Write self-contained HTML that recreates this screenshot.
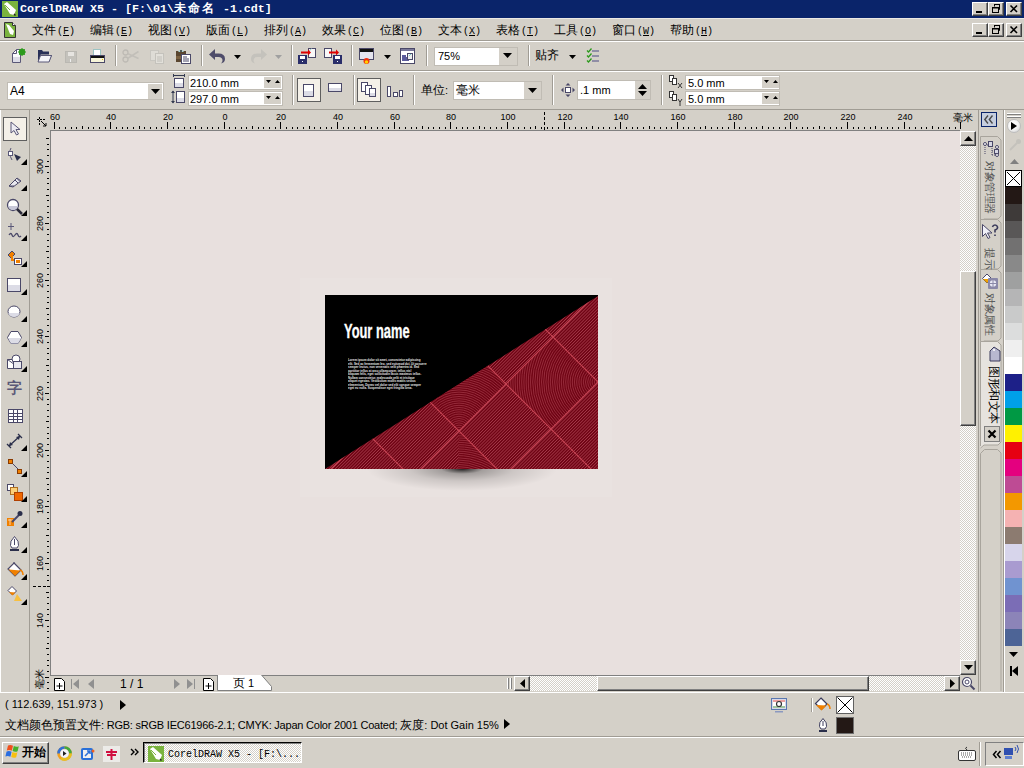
<!DOCTYPE html>
<html><head><meta charset="utf-8">
<style>
*{margin:0;padding:0;box-sizing:border-box}
html,body{width:1024px;height:768px;overflow:hidden}
body{position:relative;background:#d4d0c8;font-family:"Liberation Sans",sans-serif;font-size:11px;color:#000}
.a{position:absolute}
.t{white-space:nowrap;line-height:13px}
.cj{font-size:12px}
.hatch{background-color:#ffffff;background-image:linear-gradient(45deg,#d4d0c8 25%,transparent 25%,transparent 75%,#d4d0c8 75%),linear-gradient(45deg,#d4d0c8 25%,transparent 25%,transparent 75%,#d4d0c8 75%);background-size:2px 2px;background-position:0 0,1px 1px}
.btn{border-top:1px solid #fff;border-left:1px solid #fff;border-right:1px solid #404040;border-bottom:1px solid #404040;background:#d4d0c8;box-shadow:inset -1px -1px 0 #808080}
.inp{background:#fff;border:1px solid #c0bcb4}
.sep{width:2px;border-left:1px solid #a09c94;border-right:1px solid #fff}
.pr{background:#f4f0e8;border:1px solid #5f5f5f}
svg{position:absolute;overflow:visible}
</style></head><body>

<div class="a" style="left:0px;top:0px;width:1024px;height:18px;background:#0a246a"></div>
<div class="a" style="left:0px;top:18px;width:1024px;height:1px;background:#ece9e4"></div>
<div class="a t" style="left:20px;top:3px;color:#fff;font-family:'Liberation Mono',monospace;font-weight:bold;font-size:11.67px;line-height:13px;letter-spacing:0">CorelDRAW X5 - [F:\01\<span class="cj" style="font-weight:bold;letter-spacing:2px">未命名</span> -1.cdt]</div>
<div class="a" style="left:972px;top:2px;width:16px;height:14px;background:#d4d0c8;border-top:1px solid #fff;border-left:1px solid #fff;border-right:1px solid #404040;border-bottom:1px solid #404040;box-shadow:inset -1px -1px 0 #808080"></div>
<div class="a" style="left:988px;top:2px;width:16px;height:14px;background:#d4d0c8;border-top:1px solid #fff;border-left:1px solid #fff;border-right:1px solid #404040;border-bottom:1px solid #404040;box-shadow:inset -1px -1px 0 #808080"></div>
<div class="a" style="left:1006px;top:2px;width:16px;height:14px;background:#d4d0c8;border-top:1px solid #fff;border-left:1px solid #fff;border-right:1px solid #404040;border-bottom:1px solid #404040;box-shadow:inset -1px -1px 0 #808080"></div>
<div class="a" style="left:976px;top:11px;width:6px;height:2px;background:#000"></div>
<svg style="left:988px;top:2px" width="16" height="14"><path d="M6.5 2.5h5v5h-1.5 M6.5 2.5v2" stroke="#000" stroke-width="1" fill="none"/><rect x="6" y="2" width="6" height="1" fill="#000"/><rect x="4" y="5" width="6" height="5" fill="none" stroke="#000" stroke-width="1" transform="translate(.5 .5)"/><rect x="4" y="5" width="6" height="1" fill="#000" transform="translate(.5 .5)"/></svg>
<svg style="left:1006px;top:2px" width="16" height="14"><path d="M4.5 3.5l6.5 6.5M11 3.5L4.5 10" stroke="#000" stroke-width="1.6" fill="none"/></svg>
<svg style="left:2px;top:1px" width="16" height="16" viewBox="0 0 16 16"><rect width="16" height="16" fill="#7ab33e"/><path d="M2 3l3-2 9 8-2 5-4-1z" fill="#fff"/><path d="M12 13l1.5 1.5" stroke="#222" stroke-width="1.5"/><path d="M3 4l5 5" stroke="#7ab33e" stroke-width="1"/></svg>
<svg style="left:4px;top:22px" width="12" height="16" viewBox="0 0 12 16"><path d="M.5 .5h8l3 3v12h-11z" fill="#7ab33e" stroke="#333"/><path d="M2 2l3 1 5 6-1 4-3-1z" fill="#fff"/><path d="M8.5 .5v3h3" fill="#fff" stroke="#333"/></svg>
<div class="a t" style="left:32px;top:23px;line-height:14px"><span class="cj">文件</span><span style="font-family:'Liberation Mono';font-size:10px;margin-left:1px">(<u>F</u>)</span></div>
<div class="a t" style="left:90px;top:23px;line-height:14px"><span class="cj">编辑</span><span style="font-family:'Liberation Mono';font-size:10px;margin-left:1px">(<u>E</u>)</span></div>
<div class="a t" style="left:148px;top:23px;line-height:14px"><span class="cj">视图</span><span style="font-family:'Liberation Mono';font-size:10px;margin-left:1px">(<u>V</u>)</span></div>
<div class="a t" style="left:206px;top:23px;line-height:14px"><span class="cj">版面</span><span style="font-family:'Liberation Mono';font-size:10px;margin-left:1px">(<u>L</u>)</span></div>
<div class="a t" style="left:264px;top:23px;line-height:14px"><span class="cj">排列</span><span style="font-family:'Liberation Mono';font-size:10px;margin-left:1px">(<u>A</u>)</span></div>
<div class="a t" style="left:322px;top:23px;line-height:14px"><span class="cj">效果</span><span style="font-family:'Liberation Mono';font-size:10px;margin-left:1px">(<u>C</u>)</span></div>
<div class="a t" style="left:380px;top:23px;line-height:14px"><span class="cj">位图</span><span style="font-family:'Liberation Mono';font-size:10px;margin-left:1px">(<u>B</u>)</span></div>
<div class="a t" style="left:438px;top:23px;line-height:14px"><span class="cj">文本</span><span style="font-family:'Liberation Mono';font-size:10px;margin-left:1px">(<u>X</u>)</span></div>
<div class="a t" style="left:496px;top:23px;line-height:14px"><span class="cj">表格</span><span style="font-family:'Liberation Mono';font-size:10px;margin-left:1px">(<u>T</u>)</span></div>
<div class="a t" style="left:554px;top:23px;line-height:14px"><span class="cj">工具</span><span style="font-family:'Liberation Mono';font-size:10px;margin-left:1px">(<u>O</u>)</span></div>
<div class="a t" style="left:612px;top:23px;line-height:14px"><span class="cj">窗口</span><span style="font-family:'Liberation Mono';font-size:10px;margin-left:1px">(<u>W</u>)</span></div>
<div class="a t" style="left:670px;top:23px;line-height:14px"><span class="cj">帮助</span><span style="font-family:'Liberation Mono';font-size:10px;margin-left:1px">(<u>H</u>)</span></div>
<div class="a" style="left:972px;top:23px;width:16px;height:14px;background:#d4d0c8;border-top:1px solid #fff;border-left:1px solid #fff;border-right:1px solid #404040;border-bottom:1px solid #404040;box-shadow:inset -1px -1px 0 #808080"></div>
<div class="a" style="left:988px;top:23px;width:16px;height:14px;background:#d4d0c8;border-top:1px solid #fff;border-left:1px solid #fff;border-right:1px solid #404040;border-bottom:1px solid #404040;box-shadow:inset -1px -1px 0 #808080"></div>
<div class="a" style="left:1006px;top:23px;width:16px;height:14px;background:#d4d0c8;border-top:1px solid #fff;border-left:1px solid #fff;border-right:1px solid #404040;border-bottom:1px solid #404040;box-shadow:inset -1px -1px 0 #808080"></div>
<div class="a" style="left:976px;top:32px;width:6px;height:2px;background:#000"></div>
<svg style="left:988px;top:23px" width="16" height="14"><path d="M6.5 2.5h5v5h-1.5 M6.5 2.5v2" stroke="#000" stroke-width="1" fill="none"/><rect x="6" y="2" width="6" height="1" fill="#000"/><rect x="4" y="5" width="6" height="5" fill="none" stroke="#000" stroke-width="1" transform="translate(.5 .5)"/><rect x="4" y="5" width="6" height="1" fill="#000" transform="translate(.5 .5)"/></svg>
<svg style="left:1006px;top:23px" width="16" height="14"><path d="M4.5 3.5l6.5 6.5M11 3.5L4.5 10" stroke="#000" stroke-width="1.6" fill="none"/></svg>
<div class="a" style="left:0px;top:40px;width:1024px;height:1px;background:#a09c94"></div>
<div class="a" style="left:0px;top:41px;width:1024px;height:1px;background:#fff"></div>
<div class="a" style="left:0px;top:70px;width:1024px;height:1px;background:#a09c94"></div>
<div class="a" style="left:0px;top:71px;width:1024px;height:1px;background:#fff"></div>
<div class="a" style="left:115px;top:45px;width:2px;height:21px;border-left:1px solid #a09c94;border-right:1px solid #fff"></div>
<div class="a" style="left:201px;top:45px;width:2px;height:21px;border-left:1px solid #a09c94;border-right:1px solid #fff"></div>
<div class="a" style="left:291px;top:45px;width:2px;height:21px;border-left:1px solid #a09c94;border-right:1px solid #fff"></div>
<div class="a" style="left:351px;top:45px;width:2px;height:21px;border-left:1px solid #a09c94;border-right:1px solid #fff"></div>
<div class="a" style="left:426px;top:45px;width:2px;height:21px;border-left:1px solid #a09c94;border-right:1px solid #fff"></div>
<div class="a" style="left:528px;top:45px;width:2px;height:21px;border-left:1px solid #a09c94;border-right:1px solid #fff"></div>
<div class="a" style="left:434px;top:47px;width:84px;height:19px;background:#fff;border:1px solid #c0bcb4"></div>
<div class="a" style="left:499px;top:48px;width:18px;height:17px;background:#d4d0c8"></div>
<svg style="left:503px;top:53px" width="9" height="5"><path d="M0 0h9L4.5 5z" fill="#000"/></svg>
<div class="a t" style="left:438px;top:50px;font-size:11px">75%</div>
<div class="a t" style="left:535px;top:49px;"><span class="cj">贴齐</span></div>
<svg style="left:234px;top:55px" width="7" height="4"><path d="M0 0h7L3.5 4z" fill="#000"/></svg>
<svg style="left:275px;top:55px" width="7" height="4"><path d="M0 0h7L3.5 4z" fill="#a0a0a0"/></svg>
<svg style="left:384px;top:55px" width="7" height="4"><path d="M0 0h7L3.5 4z" fill="#000"/></svg>
<svg style="left:569px;top:55px" width="7" height="4"><path d="M0 0h7L3.5 4z" fill="#000"/></svg>
<div class="a" style="left:0px;top:109px;width:1024px;height:1px;background:#a09c94"></div>
<div class="a" style="left:7px;top:82px;width:157px;height:18px;background:#fff;border:1px solid #c0bcb4"></div>
<div class="a" style="left:148px;top:84px;width:14px;height:15px;background:#d4d0c8"></div>
<svg style="left:151px;top:89px" width="9" height="5"><path d="M0 0h9L4.5 5z" fill="#000"/></svg>
<div class="a t" style="left:10px;top:85px;font-size:12px">A4</div>
<div class="a" style="left:188px;top:75px;width:95px;height:15px;background:#fff;border:1px solid #c0bcb4"></div>
<div class="a" style="left:264px;top:77px;width:17px;height:11px;background:#d4d0c8"></div>
<svg style="left:266px;top:80px" width="14" height="4"><path d="M0 0h5L2.5 3z M9 3h5L11.5 0z" fill="#000"/></svg>
<div class="a t" style="left:190px;top:77px;">210.0 mm</div>
<div class="a" style="left:188px;top:91px;width:95px;height:15px;background:#fff;border:1px solid #c0bcb4"></div>
<div class="a" style="left:264px;top:93px;width:17px;height:11px;background:#d4d0c8"></div>
<svg style="left:266px;top:96px" width="14" height="4"><path d="M0 0h5L2.5 3z M9 3h5L11.5 0z" fill="#000"/></svg>
<div class="a t" style="left:190px;top:93px;">297.0 mm</div>
<div class="a" style="left:292px;top:75px;width:2px;height:30px;border-left:1px solid #a09c94;border-right:1px solid #fff"></div>
<div class="a" style="left:353px;top:75px;width:2px;height:30px;border-left:1px solid #a09c94;border-right:1px solid #fff"></div>
<div class="a" style="left:413px;top:75px;width:2px;height:30px;border-left:1px solid #a09c94;border-right:1px solid #fff"></div>
<div class="a" style="left:552px;top:75px;width:2px;height:30px;border-left:1px solid #a09c94;border-right:1px solid #fff"></div>
<div class="a" style="left:661px;top:75px;width:2px;height:30px;border-left:1px solid #a09c94;border-right:1px solid #fff"></div>
<div class="a" style="left:297px;top:78px;width:24px;height:24px;background:#f4f0e8;border:1px solid #5f5f5f"></div>
<div class="a" style="left:357px;top:78px;width:24px;height:24px;background:#f4f0e8;border:1px solid #5f5f5f"></div>
<div class="a t" style="left:421px;top:84px;"><span class="cj">单位</span>:</div>
<div class="a" style="left:453px;top:81px;width:89px;height:19px;background:#fff;border:1px solid #c0bcb4"></div>
<div class="a" style="left:524px;top:82px;width:17px;height:17px;background:#d4d0c8"></div>
<svg style="left:528px;top:88px" width="9" height="5"><path d="M0 0h9L4.5 5z" fill="#000"/></svg>
<div class="a t" style="left:456px;top:84px;"><span class="cj">毫米</span></div>
<div class="a" style="left:577px;top:80px;width:74px;height:20px;background:#fff;border:1px solid #c0bcb4"></div>
<div class="a" style="left:635px;top:81px;width:15px;height:18px;background:#d4d0c8"></div>
<svg style="left:638px;top:84px" width="9" height="12"><path d="M0 5h9L4.5 0z M0 7h9L4.5 12z" fill="#000"/></svg>
<div class="a t" style="left:580px;top:84px;">.1 mm</div>
<div class="a" style="left:685px;top:75px;width:95px;height:15px;background:#fff;border:1px solid #c0bcb4"></div>
<div class="a" style="left:762px;top:77px;width:17px;height:11px;background:#d4d0c8"></div>
<svg style="left:764px;top:80px" width="14" height="4"><path d="M0 0h5L2.5 3z M9 3h5L11.5 0z" fill="#000"/></svg>
<div class="a t" style="left:688px;top:77px;">5.0 mm</div>
<div class="a" style="left:685px;top:91px;width:95px;height:15px;background:#fff;border:1px solid #c0bcb4"></div>
<div class="a" style="left:762px;top:93px;width:17px;height:11px;background:#d4d0c8"></div>
<svg style="left:764px;top:96px" width="14" height="4"><path d="M0 0h5L2.5 3z M9 3h5L11.5 0z" fill="#000"/></svg>
<div class="a t" style="left:688px;top:93px;">5.0 mm</div>
<svg style="left:11px;top:48px" width="16" height="16" viewBox="0 0 16 16"><path d="M1.5 5.5l4-4h4v13h-8z" fill="#fbfbfd" stroke="#5a5878"/><rect x="2" y="9" width="7" height="5" fill="#dcdce6"/><path d="M1.5 5.5h4v-4" fill="none" stroke="#5a5878"/><circle cx="11" cy="4" r="3.2" fill="#2c9a1c"/><path d="M11 0v8M7 4h8M8.2 1.2l5.6 5.6M13.8 1.2l-5.6 5.6" stroke="#2c9a1c" stroke-width="1"/></svg>
<svg style="left:37px;top:49px" width="16" height="14" viewBox="0 0 16 14"><path d="M1 1h4l1 1.5h6v3H1z" fill="#283058"/><path d="M1 2v11h11l3-7H4z" fill="#283058"/><path d="M3.5 6.5h11l-2.5 6.5h-11z" fill="#f4f4f8" stroke="#5a5878"/></svg>
<svg style="left:65px;top:51px" width="12" height="12" viewBox="0 0 12 12"><rect x=".5" y=".5" width="11" height="11" fill="#c4c2bc" stroke="#bab8b2"/><rect x="3" y="1" width="6" height="4" fill="#e6e4e0"/><rect x="5" y="8" width="1" height="3" fill="#eee"/></svg>
<svg style="left:90px;top:49px" width="15" height="14" viewBox="0 0 15 14"><rect x="3.5" y=".5" width="7" height="7" fill="#fff" stroke="#9cc4c4"/><rect x=".5" y="6.5" width="14" height="7" fill="#f6f4d8" stroke="#4a4868"/><rect x="1" y="7" width="13" height="2" fill="#111"/><rect x="12" y="10" width="1" height="1" fill="#e8b800"/></svg>
<svg style="left:122px;top:49px" width="17" height="14" viewBox="0 0 17 14"><circle cx="3.5" cy="3.5" r="2.5" fill="none" stroke="#bdbab4" stroke-width="1.3"/><circle cx="3.5" cy="10.5" r="2.5" fill="none" stroke="#bdbab4" stroke-width="1.3"/><path d="M5.5 4.5l11 5M5.5 9.5l11-7" stroke="#c2bfb9" stroke-width="1.5"/></svg>
<svg style="left:150px;top:50px" width="14" height="14" viewBox="0 0 14 14"><rect x=".5" y=".5" width="8" height="10" fill="#dedcd6" stroke="#c8c6c0"/><rect x="5.5" y="3.5" width="8" height="10" fill="#e2e0da" stroke="#c4c2bc"/><path d="M7 7h5M7 9h5M7 11h5" stroke="#c0beb8"/></svg>
<svg style="left:175px;top:48px" width="16" height="16" viewBox="0 0 16 16"><rect x="1" y="3" width="10" height="11" fill="#5a4630"/><rect x="1" y="8" width="10" height="3" fill="#7a6040"/><path d="M3 4q3-5 6 0z" fill="#a8d4d4"/><circle cx="6" cy="3" r="1" fill="#333"/><rect x="6.5" y="6.5" width="9" height="9" fill="#fff" stroke="#4a4868"/><path d="M8 9h4M8 11h6M8 13h6" stroke="#4a4868"/></svg>
<svg style="left:209px;top:48px" width="17" height="16" viewBox="0 0 17 16"><path d="M6 1L0 6.5 6 12V9h3.5q4 0 4 3.5 0 1.5-1.5 3 4-1 4-4.5 0-5.5-6.5-5.5H6z" fill="#4e4c6a"/></svg>
<svg style="left:250px;top:48px" width="17" height="16" viewBox="0 0 17 16"><path d="M11 1l6 5.5-6 5.5V9H7.5q-4 0-4 3.5 0 1.5 1.5 3-4-1-4-4.5 0-5.5 6.5-5.5H11z" fill="#c4c2bc"/></svg>
<svg style="left:298px;top:48px" width="18" height="16" viewBox="0 0 18 16"><rect x="10.5" y=".5" width="7" height="9" fill="#f8f8f8" stroke="#4a4868"/><path d="M10.5 4l3-3.5" stroke="#9cc"/><path d="M3 4.5h8" stroke="#d00" stroke-width="2"/><path d="M10 1.5l3 3-3 3z" fill="#d00"/><rect x=".5" y="7.5" width="8" height="8" fill="#2a2e6a" stroke="#2a2e6a"/><rect x="2" y="8" width="5" height="3" fill="#fff"/><rect x="4" y="13" width="1" height="1" fill="#fff"/></svg>
<svg style="left:324px;top:48px" width="18" height="16" viewBox="0 0 18 16"><rect x=".5" y=".5" width="7" height="9" fill="#f8f8f8" stroke="#4a4868"/><path d="M5 4.5h8" stroke="#d00" stroke-width="2"/><path d="M12 1.5l3 3-3 3z" fill="#d00"/><rect x="9.5" y="7.5" width="8" height="8" fill="#2a2e6a" stroke="#2a2e6a"/><rect x="11" y="8" width="5" height="3" fill="#fff"/><rect x="13" y="13" width="1" height="1" fill="#fff"/></svg>
<svg style="left:359px;top:48px" width="15" height="17" viewBox="0 0 15 17"><rect x=".5" y=".5" width="14" height="11" fill="#e4e4ee" stroke="#4a4868"/><rect x="1" y="1" width="13" height="3" fill="#111"/><circle cx="7.5" cy="13" r="3" fill="#f03010"/><circle cx="7.5" cy="14" r="1.8" fill="#ffd000"/></svg>
<svg style="left:400px;top:48px" width="15" height="16" viewBox="0 0 15 16"><rect x=".5" y=".5" width="14" height="15" fill="#fff" stroke="#4a4868"/><rect x="1" y="1" width="13" height="2" fill="#7a789a"/><path d="M2 7h4v2h3v4H2z" fill="#5c5c9c"/><rect x="7.5" y="5.5" width="5" height="6" fill="#eee" stroke="#4a4868"/><path d="M9 8l2-2" stroke="#7cc"/></svg>
<svg style="left:586px;top:48px" width="14" height="16" viewBox="0 0 14 16"><path d="M6 3h7M6 8h7M6 13h7" stroke="#7a789a" stroke-width="1.5"/><path d="M1 2.5l1.5 1.5 3-3.5M1 7.5l1.5 1.5 3-3.5M1 12.5l1.5 1.5 3-3.5" stroke="#2c9a1c" stroke-width="1.3" fill="none"/></svg>
<svg style="left:173px;top:74px" width="12" height="14" viewBox="0 0 12 14"><path d="M.5 1.5h11M.5 0v3M11.5 0v3" stroke="#333a50"/><rect x="1.5" y="4.5" width="9" height="9" fill="#fff" stroke="#4a4868"/><rect x="2" y="9" width="8" height="4" fill="#dcdce6"/></svg>
<svg style="left:171px;top:90px" width="14" height="14" viewBox="0 0 14 14"><path d="M2 1v12" stroke="#333a50"/><path d="M0 3l2-2.5L4 3zM0 11l2 2.5L4 11z" fill="#333a50"/><rect x="5.5" y="1.5" width="8" height="11" fill="#fff" stroke="#4a4868"/><rect x="6" y="8" width="7" height="4" fill="#dcdce6"/></svg>
<svg style="left:303px;top:84px" width="11" height="13" viewBox="0 0 11 13"><rect x=".5" y=".5" width="10" height="12" fill="#fff" stroke="#4a4868"/><rect x="1" y="7" width="9" height="5" fill="#dcdce6"/></svg>
<svg style="left:328px;top:83px" width="14" height="9" viewBox="0 0 14 9"><rect x=".5" y=".5" width="13" height="8" fill="#fff" stroke="#4a4868"/><rect x="1" y="5" width="12" height="3" fill="#dcdce6"/></svg>
<svg style="left:361px;top:82px" width="16" height="15" viewBox="0 0 16 15"><rect x=".5" y=".5" width="6" height="9" fill="#fff" stroke="#4a4868"/><rect x="4.5" y="3.5" width="6" height="9" fill="#fff" stroke="#4a4868"/><rect x="8.5" y="6.5" width="6" height="8" fill="#fff" stroke="#4a4868"/><rect x="9" y="11" width="5" height="3" fill="#dcdce6"/></svg>
<svg style="left:387px;top:86px" width="16" height="11" viewBox="0 0 16 11"><rect x=".5" y=".5" width="3" height="10" fill="#fff" stroke="#4a4868"/><rect x="6.5" y="6.5" width="4" height="4" fill="#fff" stroke="#4a4868"/><rect x="12.5" y="4.5" width="3" height="6" fill="#fff" stroke="#4a4868"/></svg>
<svg style="left:561px;top:83px" width="14" height="14" viewBox="0 0 14 14"><path d="M7 0l2.5 2.5h-5zM7 14l2.5-2.5h-5zM0 7l2.5-2.5v5zM14 7l-2.5-2.5v5z" fill="#4a4868"/><rect x="4.5" y="4.5" width="5" height="5" fill="#fff" stroke="#4a4868"/></svg>
<svg style="left:669px;top:75px" width="14" height="14" viewBox="0 0 14 14"><rect x=".5" y=".5" width="4" height="6" fill="#fff" stroke="#333"/><rect x="3.5" y="3.5" width="4" height="6" fill="#fff" stroke="#333"/><path d="M9 8l4 5M13 8l-4 5" stroke="#333"/></svg>
<svg style="left:669px;top:91px" width="14" height="15" viewBox="0 0 14 15"><rect x=".5" y=".5" width="4" height="6" fill="#fff" stroke="#333"/><rect x="3.5" y="3.5" width="4" height="6" fill="#fff" stroke="#333"/><path d="M9 8l2 3 2-3M11 11v4" stroke="#333" fill="none"/></svg>
<div class="a" style="left:0px;top:110px;width:1px;height:583px;background:#fff"></div>
<div class="a" style="left:29px;top:110px;width:1px;height:583px;background:#a09c94"></div>
<div class="a" style="left:3px;top:117px;width:24px;height:24px;background:#f4f0e8;border:1px solid #5f5f5f"></div>
<svg style="left:10px;top:121px" width="10" height="15" viewBox="0 0 10 15"><path d="M1 1v11l3-2.5 2.5 4.5 2-1-2.5-4.5h4z" fill="#ecebf2" stroke="#5a5878" stroke-linejoin="round"/></svg>
<svg style="left:7px;top:147px" width="15" height="16" viewBox="0 0 15 16"><path d="M4 1q-3 5 1 12" fill="none" stroke="#5a5878"/><rect x="1.5" y="4.5" width="4" height="4" fill="#fff" stroke="#5a5878"/><path d="M7 7l7 3-4 4z" fill="#2a2e4a"/></svg>
<svg style="left:21px;top:159px" width="6" height="6"><path d="M6 0v6H0z" fill="#000"/></svg>
<svg style="left:8px;top:176px" width="14" height="12" viewBox="0 0 14 12"><path d="M1 10l8-8 4 3-8 6z" fill="#e8e8ee" stroke="#4a4868"/><path d="M1 10h5" stroke="#4a4868"/><path d="M7 4l3 3M9 2.5l3 3" stroke="#4a4868"/></svg>
<svg style="left:21px;top:185px" width="6" height="6"><path d="M6 0v6H0z" fill="#000"/></svg>
<svg style="left:6px;top:198px" width="17" height="18" viewBox="0 0 17 18"><circle cx="7" cy="7" r="5.5" fill="#fff" stroke="#4a4868" stroke-width="1.3"/><path d="M2 8h10q-1 4-5 4-4 0-5-4z" fill="#c8c8d8"/><path d="M11 11l5 5" stroke="#2a2a3a" stroke-width="2.5"/></svg>
<svg style="left:21px;top:210px" width="6" height="6"><path d="M6 0v6H0z" fill="#000"/></svg>
<svg style="left:7px;top:222px" width="16" height="18" viewBox="0 0 16 18"><path d="M4 1v7M1 4.5h6" stroke="#5a5878"/><path d="M2 13q2-3 3 0t3 0 3 0 3 1" fill="none" stroke="#4a4868" stroke-width="1.3"/></svg>
<svg style="left:21px;top:235px" width="6" height="6"><path d="M6 0v6H0z" fill="#000"/></svg>
<svg style="left:7px;top:250px" width="16" height="17" viewBox="0 0 16 17"><path d="M1 5l4-4 3 3-4 4z" fill="#f08000" stroke="#4a4868"/><path d="M5 6v4h4" stroke="#f08000" stroke-width="2" fill="none"/><rect x="7.5" y="8.5" width="7" height="6" fill="#fff" stroke="#4a4868"/><rect x="9" y="10" width="4" height="3" fill="#f08000"/></svg>
<svg style="left:21px;top:261px" width="6" height="6"><path d="M6 0v6H0z" fill="#000"/></svg>
<svg style="left:7px;top:278px" width="15" height="15" viewBox="0 0 15 15"><rect x=".5" y=".5" width="13" height="13" fill="#fff" stroke="#4a4868"/><rect x="1" y="7" width="12" height="6" fill="#dcdce6"/></svg>
<svg style="left:21px;top:289px" width="6" height="6"><path d="M6 0v6H0z" fill="#000"/></svg>
<svg style="left:7px;top:305px" width="14" height="13" viewBox="0 0 14 13"><ellipse cx="7" cy="6.5" rx="6" ry="5.5" fill="#fff" stroke="#4a4868"/><path d="M1.3 8h11.4q-1.5 4-5.7 4-4.2 0-5.7-4z" fill="#dcdce6"/></svg>
<svg style="left:21px;top:316px" width="6" height="6"><path d="M6 0v6H0z" fill="#000"/></svg>
<svg style="left:7px;top:331px" width="15" height="13" viewBox="0 0 15 13"><path d="M4 .5h7l3.5 6-3.5 6H4L.5 6.5z" fill="#fff" stroke="#4a4868"/><path d="M1 7h13.3l-3.3 5.5H4z" fill="#dcdce6"/></svg>
<svg style="left:21px;top:341px" width="6" height="6"><path d="M6 0v6H0z" fill="#000"/></svg>
<svg style="left:7px;top:354px" width="16" height="15" viewBox="0 0 16 15"><path d="M.5 5.5h7v9h-7z" fill="#fff" stroke="#4a4868"/><path d="M.5 5.5l7 5" stroke="#4a4868"/><circle cx="9" cy="5" r="4" fill="#fff" stroke="#4a4868"/><rect x="6.5" y="7.5" width="8" height="7" fill="#e8e8ee" stroke="#4a4868"/></svg>
<svg style="left:21px;top:366px" width="6" height="6"><path d="M6 0v6H0z" fill="#000"/></svg>
<div class="a t" style="left:7px;top:380px;color:#5a5878;font-size:15px;line-height:16px;font-weight:bold">字</div>
<svg style="left:8px;top:409px" width="15" height="14" viewBox="0 0 15 14"><rect x=".5" y=".5" width="14" height="13" fill="#fff" stroke="#4a4868"/><path d="M.5 4.5h14M.5 7.5h14M.5 10.5h14M5.5 .5v13M9.5 .5v13" stroke="#4a4868" fill="none"/></svg>
<svg style="left:7px;top:434px" width="15" height="14" viewBox="0 0 15 14"><path d="M2 12l11-10" stroke="#2a2e4a" stroke-width="1.3"/><path d="M0 10l4 4M11 0l4 4" stroke="#2a2e4a" stroke-width="1.3"/><path d="M2 12l1-4 3 3zM13 2l-1 4-3-3z" fill="#2a2e4a"/></svg>
<svg style="left:21px;top:445px" width="6" height="6"><path d="M6 0v6H0z" fill="#000"/></svg>
<svg style="left:8px;top:459px" width="15" height="16" viewBox="0 0 15 16"><path d="M3 3l9 9" stroke="#4a4868"/><rect x=".5" y=".5" width="4" height="4" fill="#f08000" stroke="#8a3a00"/><rect x="9.5" y="10.5" width="4" height="4" fill="#f08000" stroke="#8a3a00"/></svg>
<svg style="left:21px;top:471px" width="6" height="6"><path d="M6 0v6H0z" fill="#000"/></svg>
<svg style="left:7px;top:484px" width="16" height="17" viewBox="0 0 16 17"><rect x=".5" y=".5" width="6" height="6" fill="#fff" stroke="#4a4868"/><rect x="3.5" y="3.5" width="7" height="7" fill="#fcd078" stroke="#b07020"/><rect x="7.5" y="8.5" width="8" height="8" fill="#f06800" stroke="#b04000"/></svg>
<svg style="left:21px;top:496px" width="6" height="6"><path d="M6 0v6H0z" fill="#000"/></svg>
<svg style="left:6px;top:510px" width="17" height="17" viewBox="0 0 17 17"><rect x="1" y="8" width="7" height="8" fill="#f08000"/><path d="M2 10h5M4 9v6" stroke="#fcd0a0"/><path d="M6 12l7-7" stroke="#4a4868" stroke-width="2"/><circle cx="14" cy="3.5" r="2.5" fill="#2a2e4a"/></svg>
<svg style="left:21px;top:522px" width="6" height="6"><path d="M6 0v6H0z" fill="#000"/></svg>
<svg style="left:9px;top:536px" width="11" height="16" viewBox="0 0 11 16"><path d="M5.5 .5q5 5 4 9l-1.5 2.5h-5L1.5 9.5q-1-4 4-9z" fill="#fff" stroke="#4a4868"/><path d="M5.5 3v6" stroke="#4a4868"/><rect x="1" y="13" width="9" height="2" fill="#2a2e4a"/></svg>
<svg style="left:21px;top:547px" width="6" height="6"><path d="M6 0v6H0z" fill="#000"/></svg>
<svg style="left:6px;top:562px" width="18" height="17" viewBox="0 0 18 17"><path d="M8 1l7 7-6 6-7-7z" fill="#fff" stroke="#4a4868" stroke-width="1.2"/><path d="M2.5 7.5l6.5 6.5 5.5-5.5z" fill="#f08000"/><path d="M14 8q3 1 3 5" stroke="#f08000" stroke-width="1.5" fill="none"/><path d="M8 1V0" stroke="#4a4868"/></svg>
<svg style="left:21px;top:574px" width="6" height="6"><path d="M6 0v6H0z" fill="#000"/></svg>
<svg style="left:7px;top:586px" width="17" height="16" viewBox="0 0 17 16"><path d="M5 .5l4.5 4.5-4 4-4.5-4.5z" fill="#fff" stroke="#4a4868"/><path d="M2 6l3.5 3.5 3-3z" fill="#f08000"/><path d="M10 8l5 7H7z" fill="#f8c040"/></svg>
<svg style="left:21px;top:599px" width="6" height="6"><path d="M6 0v6H0z" fill="#000"/></svg>
<div class="a" style="left:30px;top:110px;width:948px;height:20px;background:#d4d0c8"></div>
<svg style="left:0;top:0" width="1024" height="768"><rect x="54" y="122" width="1" height="7"/><rect x="59" y="127" width="1" height="2"/><rect x="65" y="127" width="1" height="2"/><rect x="71" y="127" width="1" height="2"/><rect x="76" y="127" width="1" height="2"/><rect x="82" y="126" width="1" height="3"/><rect x="88" y="127" width="1" height="2"/><rect x="93" y="127" width="1" height="2"/><rect x="99" y="127" width="1" height="2"/><rect x="105" y="127" width="1" height="2"/><rect x="110" y="122" width="1" height="7"/><rect x="116" y="127" width="1" height="2"/><rect x="122" y="127" width="1" height="2"/><rect x="127" y="127" width="1" height="2"/><rect x="133" y="127" width="1" height="2"/><rect x="139" y="126" width="1" height="3"/><rect x="144" y="127" width="1" height="2"/><rect x="150" y="127" width="1" height="2"/><rect x="156" y="127" width="1" height="2"/><rect x="161" y="127" width="1" height="2"/><rect x="167" y="122" width="1" height="7"/><rect x="173" y="127" width="1" height="2"/><rect x="178" y="127" width="1" height="2"/><rect x="184" y="127" width="1" height="2"/><rect x="190" y="127" width="1" height="2"/><rect x="195" y="126" width="1" height="3"/><rect x="201" y="127" width="1" height="2"/><rect x="207" y="127" width="1" height="2"/><rect x="212" y="127" width="1" height="2"/><rect x="218" y="127" width="1" height="2"/><rect x="224" y="122" width="1" height="7"/><rect x="229" y="127" width="1" height="2"/><rect x="235" y="127" width="1" height="2"/><rect x="241" y="127" width="1" height="2"/><rect x="246" y="127" width="1" height="2"/><rect x="252" y="126" width="1" height="3"/><rect x="258" y="127" width="1" height="2"/><rect x="263" y="127" width="1" height="2"/><rect x="269" y="127" width="1" height="2"/><rect x="275" y="127" width="1" height="2"/><rect x="280" y="122" width="1" height="7"/><rect x="286" y="127" width="1" height="2"/><rect x="292" y="127" width="1" height="2"/><rect x="297" y="127" width="1" height="2"/><rect x="303" y="127" width="1" height="2"/><rect x="309" y="126" width="1" height="3"/><rect x="314" y="127" width="1" height="2"/><rect x="320" y="127" width="1" height="2"/><rect x="326" y="127" width="1" height="2"/><rect x="331" y="127" width="1" height="2"/><rect x="337" y="122" width="1" height="7"/><rect x="343" y="127" width="1" height="2"/><rect x="348" y="127" width="1" height="2"/><rect x="354" y="127" width="1" height="2"/><rect x="360" y="127" width="1" height="2"/><rect x="365" y="126" width="1" height="3"/><rect x="371" y="127" width="1" height="2"/><rect x="377" y="127" width="1" height="2"/><rect x="382" y="127" width="1" height="2"/><rect x="388" y="127" width="1" height="2"/><rect x="394" y="122" width="1" height="7"/><rect x="399" y="127" width="1" height="2"/><rect x="405" y="127" width="1" height="2"/><rect x="411" y="127" width="1" height="2"/><rect x="416" y="127" width="1" height="2"/><rect x="422" y="126" width="1" height="3"/><rect x="428" y="127" width="1" height="2"/><rect x="433" y="127" width="1" height="2"/><rect x="439" y="127" width="1" height="2"/><rect x="445" y="127" width="1" height="2"/><rect x="450" y="122" width="1" height="7"/><rect x="456" y="127" width="1" height="2"/><rect x="462" y="127" width="1" height="2"/><rect x="467" y="127" width="1" height="2"/><rect x="473" y="127" width="1" height="2"/><rect x="479" y="126" width="1" height="3"/><rect x="484" y="127" width="1" height="2"/><rect x="490" y="127" width="1" height="2"/><rect x="496" y="127" width="1" height="2"/><rect x="501" y="127" width="1" height="2"/><rect x="507" y="122" width="1" height="7"/><rect x="513" y="127" width="1" height="2"/><rect x="518" y="127" width="1" height="2"/><rect x="524" y="127" width="1" height="2"/><rect x="530" y="127" width="1" height="2"/><rect x="535" y="126" width="1" height="3"/><rect x="541" y="127" width="1" height="2"/><rect x="547" y="127" width="1" height="2"/><rect x="552" y="127" width="1" height="2"/><rect x="558" y="127" width="1" height="2"/><rect x="564" y="122" width="1" height="7"/><rect x="569" y="127" width="1" height="2"/><rect x="575" y="127" width="1" height="2"/><rect x="581" y="127" width="1" height="2"/><rect x="586" y="127" width="1" height="2"/><rect x="592" y="126" width="1" height="3"/><rect x="598" y="127" width="1" height="2"/><rect x="603" y="127" width="1" height="2"/><rect x="609" y="127" width="1" height="2"/><rect x="615" y="127" width="1" height="2"/><rect x="620" y="122" width="1" height="7"/><rect x="626" y="127" width="1" height="2"/><rect x="632" y="127" width="1" height="2"/><rect x="637" y="127" width="1" height="2"/><rect x="643" y="127" width="1" height="2"/><rect x="649" y="126" width="1" height="3"/><rect x="654" y="127" width="1" height="2"/><rect x="660" y="127" width="1" height="2"/><rect x="666" y="127" width="1" height="2"/><rect x="671" y="127" width="1" height="2"/><rect x="677" y="122" width="1" height="7"/><rect x="683" y="127" width="1" height="2"/><rect x="688" y="127" width="1" height="2"/><rect x="694" y="127" width="1" height="2"/><rect x="700" y="127" width="1" height="2"/><rect x="705" y="126" width="1" height="3"/><rect x="711" y="127" width="1" height="2"/><rect x="717" y="127" width="1" height="2"/><rect x="722" y="127" width="1" height="2"/><rect x="728" y="127" width="1" height="2"/><rect x="734" y="122" width="1" height="7"/><rect x="739" y="127" width="1" height="2"/><rect x="745" y="127" width="1" height="2"/><rect x="751" y="127" width="1" height="2"/><rect x="756" y="127" width="1" height="2"/><rect x="762" y="126" width="1" height="3"/><rect x="768" y="127" width="1" height="2"/><rect x="773" y="127" width="1" height="2"/><rect x="779" y="127" width="1" height="2"/><rect x="785" y="127" width="1" height="2"/><rect x="790" y="122" width="1" height="7"/><rect x="796" y="127" width="1" height="2"/><rect x="802" y="127" width="1" height="2"/><rect x="807" y="127" width="1" height="2"/><rect x="813" y="127" width="1" height="2"/><rect x="819" y="126" width="1" height="3"/><rect x="824" y="127" width="1" height="2"/><rect x="830" y="127" width="1" height="2"/><rect x="836" y="127" width="1" height="2"/><rect x="841" y="127" width="1" height="2"/><rect x="847" y="122" width="1" height="7"/><rect x="853" y="127" width="1" height="2"/><rect x="858" y="127" width="1" height="2"/><rect x="864" y="127" width="1" height="2"/><rect x="870" y="127" width="1" height="2"/><rect x="875" y="126" width="1" height="3"/><rect x="881" y="127" width="1" height="2"/><rect x="887" y="127" width="1" height="2"/><rect x="892" y="127" width="1" height="2"/><rect x="898" y="127" width="1" height="2"/><rect x="904" y="122" width="1" height="7"/><rect x="909" y="127" width="1" height="2"/><rect x="915" y="127" width="1" height="2"/><rect x="921" y="127" width="1" height="2"/><rect x="926" y="127" width="1" height="2"/><rect x="932" y="126" width="1" height="3"/><rect x="938" y="127" width="1" height="2"/><rect x="943" y="127" width="1" height="2"/><rect x="949" y="127" width="1" height="2"/><rect x="955" y="127" width="1" height="2"/><rect x="960" y="122" width="1" height="7"/>
<rect x="47" y="688" width="2" height="1"/><rect x="47" y="682" width="2" height="1"/><rect x="45" y="677" width="4" height="1"/><rect x="47" y="671" width="2" height="1"/><rect x="47" y="665" width="2" height="1"/><rect x="47" y="660" width="2" height="1"/><rect x="47" y="654" width="2" height="1"/><rect x="46" y="648" width="3" height="1"/><rect x="47" y="643" width="2" height="1"/><rect x="47" y="637" width="2" height="1"/><rect x="47" y="631" width="2" height="1"/><rect x="47" y="626" width="2" height="1"/><rect x="45" y="620" width="4" height="1"/><rect x="47" y="614" width="2" height="1"/><rect x="47" y="609" width="2" height="1"/><rect x="47" y="603" width="2" height="1"/><rect x="47" y="597" width="2" height="1"/><rect x="46" y="592" width="3" height="1"/><rect x="47" y="586" width="2" height="1"/><rect x="47" y="580" width="2" height="1"/><rect x="47" y="575" width="2" height="1"/><rect x="47" y="569" width="2" height="1"/><rect x="45" y="563" width="4" height="1"/><rect x="47" y="558" width="2" height="1"/><rect x="47" y="552" width="2" height="1"/><rect x="47" y="546" width="2" height="1"/><rect x="47" y="541" width="2" height="1"/><rect x="46" y="535" width="3" height="1"/><rect x="47" y="529" width="2" height="1"/><rect x="47" y="523" width="2" height="1"/><rect x="47" y="518" width="2" height="1"/><rect x="47" y="512" width="2" height="1"/><rect x="45" y="506" width="4" height="1"/><rect x="47" y="501" width="2" height="1"/><rect x="47" y="495" width="2" height="1"/><rect x="47" y="489" width="2" height="1"/><rect x="47" y="484" width="2" height="1"/><rect x="46" y="478" width="3" height="1"/><rect x="47" y="472" width="2" height="1"/><rect x="47" y="467" width="2" height="1"/><rect x="47" y="461" width="2" height="1"/><rect x="47" y="455" width="2" height="1"/><rect x="45" y="450" width="4" height="1"/><rect x="47" y="444" width="2" height="1"/><rect x="47" y="438" width="2" height="1"/><rect x="47" y="433" width="2" height="1"/><rect x="47" y="427" width="2" height="1"/><rect x="46" y="421" width="3" height="1"/><rect x="47" y="416" width="2" height="1"/><rect x="47" y="410" width="2" height="1"/><rect x="47" y="404" width="2" height="1"/><rect x="47" y="399" width="2" height="1"/><rect x="45" y="393" width="4" height="1"/><rect x="47" y="387" width="2" height="1"/><rect x="47" y="382" width="2" height="1"/><rect x="47" y="376" width="2" height="1"/><rect x="47" y="370" width="2" height="1"/><rect x="46" y="365" width="3" height="1"/><rect x="47" y="359" width="2" height="1"/><rect x="47" y="353" width="2" height="1"/><rect x="47" y="348" width="2" height="1"/><rect x="47" y="342" width="2" height="1"/><rect x="45" y="336" width="4" height="1"/><rect x="47" y="331" width="2" height="1"/><rect x="47" y="325" width="2" height="1"/><rect x="47" y="319" width="2" height="1"/><rect x="47" y="314" width="2" height="1"/><rect x="46" y="308" width="3" height="1"/><rect x="47" y="302" width="2" height="1"/><rect x="47" y="297" width="2" height="1"/><rect x="47" y="291" width="2" height="1"/><rect x="47" y="285" width="2" height="1"/><rect x="45" y="280" width="4" height="1"/><rect x="47" y="274" width="2" height="1"/><rect x="47" y="268" width="2" height="1"/><rect x="47" y="263" width="2" height="1"/><rect x="47" y="257" width="2" height="1"/><rect x="46" y="251" width="3" height="1"/><rect x="47" y="246" width="2" height="1"/><rect x="47" y="240" width="2" height="1"/><rect x="47" y="234" width="2" height="1"/><rect x="47" y="229" width="2" height="1"/><rect x="45" y="223" width="4" height="1"/><rect x="47" y="217" width="2" height="1"/><rect x="47" y="212" width="2" height="1"/><rect x="47" y="206" width="2" height="1"/><rect x="47" y="200" width="2" height="1"/><rect x="46" y="195" width="3" height="1"/><rect x="47" y="189" width="2" height="1"/><rect x="47" y="183" width="2" height="1"/><rect x="47" y="178" width="2" height="1"/><rect x="47" y="172" width="2" height="1"/><rect x="45" y="166" width="4" height="1"/><rect x="47" y="161" width="2" height="1"/><rect x="47" y="155" width="2" height="1"/><rect x="47" y="149" width="2" height="1"/><rect x="47" y="144" width="2" height="1"/><rect x="46" y="138" width="3" height="1"/></svg>
<div class="a t" style="left:15px;top:112px;width:80px;text-align:center;font-size:9px;line-height:11px">60</div>
<div class="a t" style="left:71px;top:112px;width:80px;text-align:center;font-size:9px;line-height:11px">40</div>
<div class="a t" style="left:128px;top:112px;width:80px;text-align:center;font-size:9px;line-height:11px">20</div>
<div class="a t" style="left:185px;top:112px;width:80px;text-align:center;font-size:9px;line-height:11px">0</div>
<div class="a t" style="left:241px;top:112px;width:80px;text-align:center;font-size:9px;line-height:11px">20</div>
<div class="a t" style="left:298px;top:112px;width:80px;text-align:center;font-size:9px;line-height:11px">40</div>
<div class="a t" style="left:355px;top:112px;width:80px;text-align:center;font-size:9px;line-height:11px">60</div>
<div class="a t" style="left:411px;top:112px;width:80px;text-align:center;font-size:9px;line-height:11px">80</div>
<div class="a t" style="left:468px;top:112px;width:80px;text-align:center;font-size:9px;line-height:11px">100</div>
<div class="a t" style="left:525px;top:112px;width:80px;text-align:center;font-size:9px;line-height:11px">120</div>
<div class="a t" style="left:581px;top:112px;width:80px;text-align:center;font-size:9px;line-height:11px">140</div>
<div class="a t" style="left:638px;top:112px;width:80px;text-align:center;font-size:9px;line-height:11px">160</div>
<div class="a t" style="left:695px;top:112px;width:80px;text-align:center;font-size:9px;line-height:11px">180</div>
<div class="a t" style="left:751px;top:112px;width:80px;text-align:center;font-size:9px;line-height:11px">200</div>
<div class="a t" style="left:808px;top:112px;width:80px;text-align:center;font-size:9px;line-height:11px">220</div>
<div class="a t" style="left:865px;top:112px;width:80px;text-align:center;font-size:9px;line-height:11px">240</div>
<div class="a t" style="left:953px;top:112px;font-size:10px;line-height:11px">毫米</div>
<div class="a t" style="left:0px;top:615px;width:80px;height:11px;text-align:center;font-size:9px;line-height:11px;transform-origin:40px 5.5px;transform:translate(0,0) rotate(-90deg);left:0px;">140</div>
<div class="a t" style="left:0px;top:558px;width:80px;height:11px;text-align:center;font-size:9px;line-height:11px;transform-origin:40px 5.5px;transform:translate(0,0) rotate(-90deg);left:0px;">160</div>
<div class="a t" style="left:0px;top:501px;width:80px;height:11px;text-align:center;font-size:9px;line-height:11px;transform-origin:40px 5.5px;transform:translate(0,0) rotate(-90deg);left:0px;">180</div>
<div class="a t" style="left:0px;top:445px;width:80px;height:11px;text-align:center;font-size:9px;line-height:11px;transform-origin:40px 5.5px;transform:translate(0,0) rotate(-90deg);left:0px;">200</div>
<div class="a t" style="left:0px;top:388px;width:80px;height:11px;text-align:center;font-size:9px;line-height:11px;transform-origin:40px 5.5px;transform:translate(0,0) rotate(-90deg);left:0px;">220</div>
<div class="a t" style="left:0px;top:331px;width:80px;height:11px;text-align:center;font-size:9px;line-height:11px;transform-origin:40px 5.5px;transform:translate(0,0) rotate(-90deg);left:0px;">240</div>
<div class="a t" style="left:0px;top:275px;width:80px;height:11px;text-align:center;font-size:9px;line-height:11px;transform-origin:40px 5.5px;transform:translate(0,0) rotate(-90deg);left:0px;">260</div>
<div class="a t" style="left:0px;top:218px;width:80px;height:11px;text-align:center;font-size:9px;line-height:11px;transform-origin:40px 5.5px;transform:translate(0,0) rotate(-90deg);left:0px;">280</div>
<div class="a t" style="left:0px;top:161px;width:80px;height:11px;text-align:center;font-size:9px;line-height:11px;transform-origin:40px 5.5px;transform:translate(0,0) rotate(-90deg);left:0px;">300</div>
<div class="a t" style="left:34px;top:689px;font-size:10px;line-height:11px;transform-origin:0 0;transform:rotate(-90deg)">毫米</div>
<svg style="left:37px;top:117px" width="10" height="10" viewBox="0 0 10 10"><path d="M0 2.5h2M3 2.5h2M6 2.5h2M2.5 0v2M2.5 3v2M2.5 6v2" stroke="#000"/><path d="M4 4l5 5M9 6v3H6" stroke="#000" fill="none"/></svg>
<div class="a" style="left:50px;top:675px;width:1px;height:16px;background:#808080"></div>
<svg style="left:544px;top:112px" width="1" height="18" viewBox="0 0 1 18"><path d="M.5 0v18" stroke="#000" stroke-dasharray="3 2"/></svg>
<svg style="left:33px;top:586px" width="17" height="1" viewBox="0 0 17 1"><path d="M0 .5h17" stroke="#000" stroke-dasharray="3 2"/></svg>
<div class="a" style="left:50px;top:130px;width:910px;height:545px;background:#e8e0de;border-left:1px solid #808080;border-top:1px solid #808080"></div>
<div class="a" style="left:300px;top:278px;width:312px;height:219px;background:rgba(255,255,255,0.08)"></div>
<div class="a" style="left:352px;top:469px;width:220px;height:24px;background:radial-gradient(ellipse 95px 22px at 50% 0,rgba(0,0,0,0.85) 0%,rgba(0,0,0,0.3) 22%,rgba(0,0,0,0.12) 55%,rgba(0,0,0,0) 100%)"></div>
<svg style="left:325px;top:295px" width="273" height="174" viewBox="0 0 273 174"><defs><clipPath id="rc"><path d="M0 174L273 1V174z"/></clipPath><clipPath id="cc0"><path d="M89 91L136 44L181 89L134 136z"/></clipPath><clipPath id="cc1"><path d="M134 136L179 181L87 183L132 228z"/></clipPath><clipPath id="cc2"><path d="M181 89L228 42L273 87L226 134z"/></clipPath><pattern id="pt" width="2.2" height="2.2" patternUnits="userSpaceOnUse" patternTransform="rotate(45)"><rect width="2.2" height="2.2" fill="#700414"/><rect width="0.6" height="2.2" fill="#b04656"/></pattern></defs><rect width="273" height="174" fill="#000"/><g clip-path="url(#rc)"><rect width="273" height="174" fill="url(#pt)"/><g clip-path="url(#cc0)"><path d="M89 91L136 44L181 89L134 136z" fill="#700414"/><g fill="none" stroke="#b04656" stroke-width="0.6"><circle cx="134" cy="136" r="1.5"/><circle cx="134" cy="136" r="3.7"/><circle cx="134" cy="136" r="5.9"/><circle cx="134" cy="136" r="8.1"/><circle cx="134" cy="136" r="10.3"/><circle cx="134" cy="136" r="12.5"/><circle cx="134" cy="136" r="14.7"/><circle cx="134" cy="136" r="16.9"/><circle cx="134" cy="136" r="19.1"/><circle cx="134" cy="136" r="21.3"/><circle cx="134" cy="136" r="23.5"/><circle cx="134" cy="136" r="25.7"/><circle cx="134" cy="136" r="27.9"/><circle cx="134" cy="136" r="30.1"/><circle cx="134" cy="136" r="32.3"/><circle cx="134" cy="136" r="34.5"/><circle cx="134" cy="136" r="36.7"/><circle cx="134" cy="136" r="38.9"/><circle cx="134" cy="136" r="41.1"/><circle cx="134" cy="136" r="43.3"/><circle cx="134" cy="136" r="45.5"/><circle cx="134" cy="136" r="47.7"/><circle cx="134" cy="136" r="49.9"/><circle cx="134" cy="136" r="52.1"/><circle cx="134" cy="136" r="54.3"/><circle cx="134" cy="136" r="56.5"/><circle cx="134" cy="136" r="58.7"/><circle cx="134" cy="136" r="60.9"/><circle cx="134" cy="136" r="63.1"/><circle cx="134" cy="136" r="65.3"/><circle cx="134" cy="136" r="67.5"/><circle cx="134" cy="136" r="69.7"/><circle cx="134" cy="136" r="71.9"/><circle cx="134" cy="136" r="74.1"/><circle cx="134" cy="136" r="76.3"/><circle cx="134" cy="136" r="78.5"/><circle cx="134" cy="136" r="80.7"/><circle cx="134" cy="136" r="82.9"/><circle cx="134" cy="136" r="85.1"/><circle cx="134" cy="136" r="87.3"/><circle cx="134" cy="136" r="89.5"/><circle cx="134" cy="136" r="91.7"/><circle cx="134" cy="136" r="93.9"/><circle cx="134" cy="136" r="96.1"/><circle cx="134" cy="136" r="98.3"/><circle cx="134" cy="136" r="100.5"/><circle cx="134" cy="136" r="102.7"/><circle cx="134" cy="136" r="104.9"/><circle cx="134" cy="136" r="107.1"/><circle cx="134" cy="136" r="109.3"/><circle cx="134" cy="136" r="111.5"/><circle cx="134" cy="136" r="113.7"/><circle cx="134" cy="136" r="115.9"/><circle cx="134" cy="136" r="118.1"/><circle cx="134" cy="136" r="120.3"/><circle cx="134" cy="136" r="122.5"/><circle cx="134" cy="136" r="124.7"/><circle cx="134" cy="136" r="126.9"/><circle cx="134" cy="136" r="129.1"/><circle cx="134" cy="136" r="131.3"/><circle cx="134" cy="136" r="133.5"/><circle cx="134" cy="136" r="135.7"/><circle cx="134" cy="136" r="137.9"/></g></g><g clip-path="url(#cc1)"><path d="M134 136L179 181L87 183L132 228z" fill="#700414"/><g fill="none" stroke="#b04656" stroke-width="0.6"><circle cx="132" cy="228" r="1.5"/><circle cx="132" cy="228" r="3.7"/><circle cx="132" cy="228" r="5.9"/><circle cx="132" cy="228" r="8.1"/><circle cx="132" cy="228" r="10.3"/><circle cx="132" cy="228" r="12.5"/><circle cx="132" cy="228" r="14.7"/><circle cx="132" cy="228" r="16.9"/><circle cx="132" cy="228" r="19.1"/><circle cx="132" cy="228" r="21.3"/><circle cx="132" cy="228" r="23.5"/><circle cx="132" cy="228" r="25.7"/><circle cx="132" cy="228" r="27.9"/><circle cx="132" cy="228" r="30.1"/><circle cx="132" cy="228" r="32.3"/><circle cx="132" cy="228" r="34.5"/><circle cx="132" cy="228" r="36.7"/><circle cx="132" cy="228" r="38.9"/><circle cx="132" cy="228" r="41.1"/><circle cx="132" cy="228" r="43.3"/><circle cx="132" cy="228" r="45.5"/><circle cx="132" cy="228" r="47.7"/><circle cx="132" cy="228" r="49.9"/><circle cx="132" cy="228" r="52.1"/><circle cx="132" cy="228" r="54.3"/><circle cx="132" cy="228" r="56.5"/><circle cx="132" cy="228" r="58.7"/><circle cx="132" cy="228" r="60.9"/><circle cx="132" cy="228" r="63.1"/><circle cx="132" cy="228" r="65.3"/><circle cx="132" cy="228" r="67.5"/><circle cx="132" cy="228" r="69.7"/><circle cx="132" cy="228" r="71.9"/><circle cx="132" cy="228" r="74.1"/><circle cx="132" cy="228" r="76.3"/><circle cx="132" cy="228" r="78.5"/><circle cx="132" cy="228" r="80.7"/><circle cx="132" cy="228" r="82.9"/><circle cx="132" cy="228" r="85.1"/><circle cx="132" cy="228" r="87.3"/><circle cx="132" cy="228" r="89.5"/><circle cx="132" cy="228" r="91.7"/><circle cx="132" cy="228" r="93.9"/><circle cx="132" cy="228" r="96.1"/><circle cx="132" cy="228" r="98.3"/><circle cx="132" cy="228" r="100.5"/><circle cx="132" cy="228" r="102.7"/><circle cx="132" cy="228" r="104.9"/><circle cx="132" cy="228" r="107.1"/><circle cx="132" cy="228" r="109.3"/><circle cx="132" cy="228" r="111.5"/><circle cx="132" cy="228" r="113.7"/><circle cx="132" cy="228" r="115.9"/><circle cx="132" cy="228" r="118.1"/><circle cx="132" cy="228" r="120.3"/><circle cx="132" cy="228" r="122.5"/><circle cx="132" cy="228" r="124.7"/><circle cx="132" cy="228" r="126.9"/><circle cx="132" cy="228" r="129.1"/><circle cx="132" cy="228" r="131.3"/><circle cx="132" cy="228" r="133.5"/><circle cx="132" cy="228" r="135.7"/><circle cx="132" cy="228" r="137.9"/></g></g><g clip-path="url(#cc2)"><path d="M181 89L228 42L273 87L226 134z" fill="#700414"/><g fill="none" stroke="#b04656" stroke-width="0.6"><circle cx="273" cy="87" r="1.5"/><circle cx="273" cy="87" r="3.7"/><circle cx="273" cy="87" r="5.9"/><circle cx="273" cy="87" r="8.1"/><circle cx="273" cy="87" r="10.3"/><circle cx="273" cy="87" r="12.5"/><circle cx="273" cy="87" r="14.7"/><circle cx="273" cy="87" r="16.9"/><circle cx="273" cy="87" r="19.1"/><circle cx="273" cy="87" r="21.3"/><circle cx="273" cy="87" r="23.5"/><circle cx="273" cy="87" r="25.7"/><circle cx="273" cy="87" r="27.9"/><circle cx="273" cy="87" r="30.1"/><circle cx="273" cy="87" r="32.3"/><circle cx="273" cy="87" r="34.5"/><circle cx="273" cy="87" r="36.7"/><circle cx="273" cy="87" r="38.9"/><circle cx="273" cy="87" r="41.1"/><circle cx="273" cy="87" r="43.3"/><circle cx="273" cy="87" r="45.5"/><circle cx="273" cy="87" r="47.7"/><circle cx="273" cy="87" r="49.9"/><circle cx="273" cy="87" r="52.1"/><circle cx="273" cy="87" r="54.3"/><circle cx="273" cy="87" r="56.5"/><circle cx="273" cy="87" r="58.7"/><circle cx="273" cy="87" r="60.9"/><circle cx="273" cy="87" r="63.1"/><circle cx="273" cy="87" r="65.3"/><circle cx="273" cy="87" r="67.5"/><circle cx="273" cy="87" r="69.7"/><circle cx="273" cy="87" r="71.9"/><circle cx="273" cy="87" r="74.1"/><circle cx="273" cy="87" r="76.3"/><circle cx="273" cy="87" r="78.5"/><circle cx="273" cy="87" r="80.7"/><circle cx="273" cy="87" r="82.9"/><circle cx="273" cy="87" r="85.1"/><circle cx="273" cy="87" r="87.3"/><circle cx="273" cy="87" r="89.5"/><circle cx="273" cy="87" r="91.7"/><circle cx="273" cy="87" r="93.9"/><circle cx="273" cy="87" r="96.1"/><circle cx="273" cy="87" r="98.3"/><circle cx="273" cy="87" r="100.5"/><circle cx="273" cy="87" r="102.7"/><circle cx="273" cy="87" r="104.9"/><circle cx="273" cy="87" r="107.1"/><circle cx="273" cy="87" r="109.3"/><circle cx="273" cy="87" r="111.5"/><circle cx="273" cy="87" r="113.7"/><circle cx="273" cy="87" r="115.9"/><circle cx="273" cy="87" r="118.1"/><circle cx="273" cy="87" r="120.3"/><circle cx="273" cy="87" r="122.5"/><circle cx="273" cy="87" r="124.7"/><circle cx="273" cy="87" r="126.9"/><circle cx="273" cy="87" r="129.1"/><circle cx="273" cy="87" r="131.3"/><circle cx="273" cy="87" r="133.5"/><circle cx="273" cy="87" r="135.7"/><circle cx="273" cy="87" r="137.9"/></g></g><g stroke="#c84454" stroke-width="1.1"><line x1="-106" y1="-10" x2="204" y2="300"/><line x1="-12" y1="-10" x2="298" y2="300"/><line x1="82" y1="-10" x2="392" y2="300"/><line x1="176" y1="-10" x2="486" y2="300"/><line x1="190" y1="-10" x2="-120" y2="300"/><line x1="280" y1="-10" x2="-30" y2="300"/><line x1="370" y1="-10" x2="60" y2="300"/></g></g></svg>
<div class="a t" style="left:344px;top:320px;color:#fff;font-weight:bold;font-size:19.5px;line-height:22px;transform-origin:0 0;transform:scaleX(0.66);-webkit-text-stroke:0.3px #fff">Your name</div>
<div class="a t" style="left:348px;top:358.0px;color:#e8e8e8;font-weight:bold;font-family:'Liberation Sans',sans-serif;font-size:10px;line-height:10px;transform-origin:0 0;transform:scale(0.295,0.36)">Lorem ipsum dolor sit amet, consectetur adipiscing</div>
<div class="a t" style="left:348px;top:361.5px;color:#e8e8e8;font-weight:bold;font-family:'Liberation Sans',sans-serif;font-size:10px;line-height:10px;transform-origin:0 0;transform:scale(0.295,0.36)">elit. Sed ac fermentum leo, sed euismod dui. Ut posuere</div>
<div class="a t" style="left:348px;top:365.0px;color:#e8e8e8;font-weight:bold;font-family:'Liberation Sans',sans-serif;font-size:10px;line-height:10px;transform-origin:0 0;transform:scale(0.295,0.36)">semper lectus, non venenatis velit pharetra id. Sed</div>
<div class="a t" style="left:348px;top:368.5px;color:#e8e8e8;font-weight:bold;font-family:'Liberation Sans',sans-serif;font-size:10px;line-height:10px;transform-origin:0 0;transform:scale(0.295,0.36)">porttitor tellus at arcu ullamcorper, tellus nisl</div>
<div class="a t" style="left:348px;top:372.0px;color:#e8e8e8;font-weight:bold;font-family:'Liberation Sans',sans-serif;font-size:10px;line-height:10px;transform-origin:0 0;transform:scale(0.295,0.36)">aliquam felis, eget sollicitudin lacus maximus tellus.</div>
<div class="a t" style="left:348px;top:375.5px;color:#e8e8e8;font-weight:bold;font-family:'Liberation Sans',sans-serif;font-size:10px;line-height:10px;transform-origin:0 0;transform:scale(0.295,0.36)">Nullam consectetur, malesuada velit et tristique</div>
<div class="a t" style="left:348px;top:379.0px;color:#e8e8e8;font-weight:bold;font-family:'Liberation Sans',sans-serif;font-size:10px;line-height:10px;transform-origin:0 0;transform:scale(0.295,0.36)">aliquet egestas. Vestibulum mollis mattis sectus</div>
<div class="a t" style="left:348px;top:382.5px;color:#e8e8e8;font-weight:bold;font-family:'Liberation Sans',sans-serif;font-size:10px;line-height:10px;transform-origin:0 0;transform:scale(0.295,0.36)">elementum. Donec vel dolor sed elit congue semper</div>
<div class="a t" style="left:348px;top:386.0px;color:#e8e8e8;font-weight:bold;font-family:'Liberation Sans',sans-serif;font-size:10px;line-height:10px;transform-origin:0 0;transform:scale(0.295,0.36)">eget eu nulla. Suspendisse eget fringilla urna.</div>
<div class="a hatch" style="left:960px;top:131px;width:16px;height:544px"></div>
<div class="a" style="left:960px;top:131px;width:16px;height:15px;background:#d4d0c8;border-top:1px solid #fff;border-left:1px solid #fff;border-right:1px solid #404040;border-bottom:1px solid #404040;box-shadow:inset -1px -1px 0 #808080"></div>
<div class="a" style="left:960px;top:660px;width:16px;height:15px;background:#d4d0c8;border-top:1px solid #fff;border-left:1px solid #fff;border-right:1px solid #404040;border-bottom:1px solid #404040;box-shadow:inset -1px -1px 0 #808080"></div>
<div class="a" style="left:960px;top:271px;width:16px;height:155px;background:#d4d0c8;border-top:1px solid #fff;border-left:1px solid #fff;border-right:1px solid #404040;border-bottom:1px solid #404040;box-shadow:inset -1px -1px 0 #808080"></div>
<div class="a" style="left:50px;top:675px;width:910px;height:16px;background:#d4d0c8;border-top:1px solid #808080"></div>
<div class="a hatch" style="left:530px;top:676px;width:414px;height:15px"></div>
<div class="a" style="left:514px;top:676px;width:16px;height:15px;background:#d4d0c8;border-top:1px solid #fff;border-left:1px solid #fff;border-right:1px solid #404040;border-bottom:1px solid #404040;box-shadow:inset -1px -1px 0 #808080"></div>
<div class="a" style="left:944px;top:676px;width:16px;height:15px;background:#d4d0c8;border-top:1px solid #fff;border-left:1px solid #fff;border-right:1px solid #404040;border-bottom:1px solid #404040;box-shadow:inset -1px -1px 0 #808080"></div>
<div class="a" style="left:597px;top:676px;width:272px;height:15px;background:#d4d0c8;border-top:1px solid #fff;border-left:1px solid #fff;border-right:1px solid #404040;border-bottom:1px solid #404040;box-shadow:inset -1px -1px 0 #808080"></div>
<svg style="left:217px;top:675px" width="56" height="16"><path d="M.5 0v15.5h54v-4l-10-11.5" fill="#fff" stroke="#808080"/></svg>
<div class="a t" style="left:233px;top:677px;"><span class="cj">页</span> 1</div>
<div class="a t" style="left:120px;top:678px;font-size:12px">1 / 1</div>
<div class="a" style="left:976px;top:110px;width:2px;height:583px;background:#d4d0c8"></div>
<div class="a" style="left:978px;top:110px;width:1px;height:583px;background:#a09c94"></div>
<div class="a" style="left:1003px;top:110px;width:1px;height:583px;background:#a09c94"></div>
<div class="a" style="left:1004px;top:110px;width:1px;height:583px;background:#fff"></div>
<div class="a" style="left:1005px;top:170px;width:17px;height:17px;background:#fff;border:1px solid #000"></div>
<svg style="left:1005px;top:170px" width="17" height="17"><path d="M2 2L15 15M15 2L2 15" stroke="#000" stroke-width="1"/></svg>
<div class="a" style="left:1005px;top:187px;width:17px;height:17px;background:#231815"></div>
<div class="a" style="left:1005px;top:204px;width:17px;height:17px;background:#3e3a39"></div>
<div class="a" style="left:1005px;top:221px;width:17px;height:17px;background:#595757"></div>
<div class="a" style="left:1005px;top:238px;width:17px;height:17px;background:#727171"></div>
<div class="a" style="left:1005px;top:255px;width:17px;height:17px;background:#898989"></div>
<div class="a" style="left:1005px;top:272px;width:17px;height:17px;background:#9fa0a0"></div>
<div class="a" style="left:1005px;top:289px;width:17px;height:17px;background:#b5b5b6"></div>
<div class="a" style="left:1005px;top:306px;width:17px;height:17px;background:#c9caca"></div>
<div class="a" style="left:1005px;top:323px;width:17px;height:17px;background:#dcdddd"></div>
<div class="a" style="left:1005px;top:340px;width:17px;height:17px;background:#efefef"></div>
<div class="a" style="left:1005px;top:357px;width:17px;height:17px;background:#ffffff"></div>
<div class="a" style="left:1005px;top:374px;width:17px;height:17px;background:#1d2088"></div>
<div class="a" style="left:1005px;top:391px;width:17px;height:17px;background:#00a0e9"></div>
<div class="a" style="left:1005px;top:408px;width:17px;height:17px;background:#009944"></div>
<div class="a" style="left:1005px;top:425px;width:17px;height:17px;background:#fff100"></div>
<div class="a" style="left:1005px;top:442px;width:17px;height:17px;background:#e60012"></div>
<div class="a" style="left:1005px;top:459px;width:17px;height:17px;background:#e4007f"></div>
<div class="a" style="left:1005px;top:476px;width:17px;height:17px;background:#be4b94"></div>
<div class="a" style="left:1005px;top:493px;width:17px;height:17px;background:#f39800"></div>
<div class="a" style="left:1005px;top:510px;width:17px;height:17px;background:#f5b2b2"></div>
<div class="a" style="left:1005px;top:527px;width:17px;height:17px;background:#8c7b70"></div>
<div class="a" style="left:1005px;top:544px;width:17px;height:17px;background:#d7d5eb"></div>
<div class="a" style="left:1005px;top:561px;width:17px;height:17px;background:#a99bd0"></div>
<div class="a" style="left:1005px;top:578px;width:17px;height:17px;background:#7093d0"></div>
<div class="a" style="left:1005px;top:595px;width:17px;height:17px;background:#7b6db6"></div>
<div class="a" style="left:1005px;top:612px;width:17px;height:17px;background:#8c84b8"></div>
<div class="a" style="left:1005px;top:629px;width:17px;height:17px;background:#4d6496"></div>
<div class="a" style="left:981px;top:112px;width:16px;height:15px;background:#c6cede;border:1px solid #0a246a"></div>
<svg style="left:984px;top:115px" width="10" height="9" viewBox="0 0 10 9"><path d="M4 .5L.8 4.5 4 8.5M8.5 .5L5.3 4.5 8.5 8.5" stroke="#4a4a4a" stroke-width="1.4" fill="none"/></svg>
<svg style="left:979px;top:136px" width="24" height="84" viewBox="0 0 24 84"><path d="M1.5 84V0.5h17l3.5 3.5V80l-3 3H5l-3.5 3" fill="#d4d0c8" stroke="#a8a49c"/></svg>
<svg style="left:979px;top:219px" width="24" height="51" viewBox="0 0 24 51"><path d="M1.5 51V0.5h17l3.5 3.5V47l-3 3H5l-3.5 3" fill="#d4d0c8" stroke="#a8a49c"/></svg>
<svg style="left:979px;top:269px" width="24" height="73" viewBox="0 0 24 73"><path d="M1.5 73V0.5h17l3.5 3.5V69l-3 3H5l-3.5 3" fill="#d4d0c8" stroke="#a8a49c"/></svg>
<svg style="left:979px;top:341px" width="24" height="105" viewBox="0 0 24 105"><path d="M1.5 105V0.5h17l3.5 3.5V101l-3 3H5l-3.5 3" fill="#e6e3de" stroke="#a8a49c"/></svg>
<svg style="left:979px;top:447px" width="24" height="244" viewBox="0 0 24 244"><path d="M1.5 244V6.5l4-4h13l3.5 3.5V244" fill="#d4d0c8" stroke="#a8a49c"/></svg>
<div class="a t" style="left:995px;top:161px;font-family:'Liberation Serif',serif;font-size:11px;line-height:11px;transform-origin:0 0;transform:rotate(90deg);color:#505050;letter-spacing:-0.4px">对象管理器</div>
<div class="a t" style="left:995px;top:248px;font-family:'Liberation Serif',serif;font-size:11px;line-height:11px;transform-origin:0 0;transform:rotate(90deg);color:#505050;letter-spacing:-0.4px">提示</div>
<div class="a t" style="left:995px;top:293px;font-family:'Liberation Serif',serif;font-size:11px;line-height:11px;transform-origin:0 0;transform:rotate(90deg);color:#505050;letter-spacing:-0.4px">对象属性</div>
<div class="a t" style="left:999px;top:366px;font-family:'Liberation Serif',serif;font-size:11.5px;line-height:11.5px;transform-origin:0 0;transform:rotate(90deg);color:#000;letter-spacing:-0.4px">图形和文本</div>
<svg style="left:983px;top:141px" width="16" height="16" viewBox="0 0 16 16"><path d="M2 4v10M9 7v7M2 4h4M9 10h3M9 14h3" stroke="#4a4868" stroke-dasharray="1 1"/><circle cx="2" cy="3" r="1.5" fill="#fff" stroke="#4a4868"/><rect x="5.5" y=".5" width="4" height="5" fill="#d8d8e4" stroke="#4a4868"/><circle cx="14" cy="6" r="1.5" fill="#fff" stroke="#4a4868"/><rect x="11.5" y="8.5" width="4" height="4" fill="#d8d8e4" stroke="#4a4868"/><circle cx="14" cy="14" r="1.5" fill="#fff" stroke="#4a4868"/></svg>
<svg style="left:982px;top:224px" width="16" height="16" viewBox="0 0 16 16"><path d="M.5 .5v12l3-3 2.5 5 2-1-2.5-4.5h4.5z" fill="#f0f0f8" stroke="#4a4868" stroke-linejoin="round"/><path d="M10.5 3q.5-2 2.5-2t2.5 2-2.5 3v2.5M13 10.5v1.5" stroke="#3a3a5a" stroke-width="1.6" fill="none"/></svg>
<svg style="left:982px;top:273px" width="17" height="17" viewBox="0 0 17 17"><path d="M5 1l4.5 4.5-4.5 4.5L.5 5.5z" fill="#fff" stroke="#4a4868"/><path d="M1 6l4 4 4-4z" fill="#f0a000"/><rect x="6" y="5" width="10" height="11" rx="1" fill="#8a88a8"/><circle cx="11" cy="10.5" r="3.2" fill="#e8e8f4"/><path d="M11 6v9M6.5 10.5h9" stroke="#8a88a8" stroke-width="1"/></svg>
<svg style="left:989px;top:346px" width="11" height="16" viewBox="0 0 11 16"><path d="M1 5l4-4 6 4v10H1z" fill="#b8b8d0" stroke="#3a3a5a"/><circle cx="5" cy="4" r="1" fill="#fff"/></svg>
<div class="a" style="left:984px;top:426px;width:16px;height:16px;background:#d4d0c8;border:1px solid #808080"></div>
<svg style="left:987px;top:429px" width="10" height="10" viewBox="0 0 10 10"><path d="M1.5 1.5l7 7M8.5 1.5l-7 7" stroke="#000" stroke-width="2.2"/></svg>
<div class="a" style="left:1007px;top:113px;width:14px;height:1px;background:#fff"></div>
<div class="a" style="left:1007px;top:114px;width:14px;height:1px;background:#808080"></div>
<div class="a" style="left:1007px;top:116px;width:14px;height:1px;background:#fff"></div>
<div class="a" style="left:1007px;top:117px;width:14px;height:1px;background:#808080"></div>
<div class="a" style="left:1007px;top:119px;width:14px;height:14px;border-radius:50%;background:radial-gradient(circle at 40% 35%,#fff 0,#f4f4f4 50%,#c8c8c8 100%);border:1px solid #bdbdbd"></div>
<svg style="left:1011px;top:122px" width="6" height="8" viewBox="0 0 6 8"><path d="M0 0l6 4-6 4z" fill="#000"/></svg>
<svg style="left:1008px;top:138px" width="13" height="14" viewBox="0 0 13 14"><path d="M2 12l7-7" stroke="#c4c2bc" stroke-width="2"/><circle cx="10.5" cy="3.5" r="2.5" fill="#c4c2bc"/></svg>
<svg style="left:1010px;top:159px" width="9" height="5" viewBox="0 0 9 5"><path d="M0 5h9L4.5 0z" fill="#808080"/></svg>
<svg style="left:1009px;top:652px" width="9" height="5" viewBox="0 0 9 5"><path d="M0 0h9L4.5 5z" fill="#000"/></svg>
<svg style="left:1010px;top:666px" width="8" height="10" viewBox="0 0 8 10"><rect x="0" y="0" width="2" height="10" fill="#000"/><path d="M8 0v10L2 5z" fill="#000"/></svg>
<svg style="left:964px;top:136px" width="9" height="5" viewBox="0 0 9 5"><path d="M0 5h9L4.5 0z" fill="#000"/></svg>
<svg style="left:964px;top:665px" width="9" height="5" viewBox="0 0 9 5"><path d="M0 0h9L4.5 5z" fill="#000"/></svg>
<svg style="left:520px;top:679px" width="5" height="9" viewBox="0 0 5 9"><path d="M5 0v9L0 4.5z" fill="#000"/></svg>
<svg style="left:950px;top:679px" width="5" height="9" viewBox="0 0 5 9"><path d="M0 0v9l5-4.5z" fill="#000"/></svg>
<svg style="left:961px;top:676px" width="15" height="15" viewBox="0 0 15 15"><circle cx="6" cy="6" r="4.5" fill="#fff" stroke="#4a4868" stroke-width="1.2"/><circle cx="6" cy="6" r="2" fill="none" stroke="#4a4868"/><path d="M9.5 9.5l4 4" stroke="#4a4868" stroke-width="2"/></svg>
<div class="a" style="left:507px;top:678px;width:1px;height:11px;background:#fff"></div>
<div class="a" style="left:508px;top:678px;width:1px;height:11px;background:#808080"></div>
<div class="a" style="left:510px;top:678px;width:1px;height:11px;background:#fff"></div>
<div class="a" style="left:511px;top:678px;width:1px;height:11px;background:#808080"></div>
<svg style="left:54px;top:678px" width="11" height="13" viewBox="0 0 11 13"><path d="M.5 .5h7l3 3v9H.5z" fill="#fff" stroke="#000"/><path d="M5.5 5v6M2.5 8h6" stroke="#000"/></svg>
<svg style="left:203px;top:678px" width="11" height="13" viewBox="0 0 11 13"><path d="M.5 .5h7l3 3v9H.5z" fill="#fff" stroke="#000"/><path d="M5.5 5v6M2.5 8h6" stroke="#000"/></svg>
<svg style="left:71px;top:679px" width="8" height="10" viewBox="0 0 8 10"><rect width="1" height="10" fill="#909090"/><path d="M8 0v10L2 5z" fill="#909090"/></svg>
<svg style="left:88px;top:679px" width="6" height="10" viewBox="0 0 6 10"><path d="M6 0v10L0 5z" fill="#909090"/></svg>
<svg style="left:174px;top:679px" width="6" height="10" viewBox="0 0 6 10"><path d="M0 0v10l6-5z" fill="#909090"/></svg>
<svg style="left:187px;top:679px" width="8" height="10" viewBox="0 0 8 10"><rect x="7" width="1" height="10" fill="#909090"/><path d="M0 0v10l6-5z" fill="#909090"/></svg>
<div class="a" style="left:0px;top:692px;width:1024px;height:1px;background:#fff"></div>
<div class="a t" style="left:5px;top:698px;font-size:11px">( 112.639, 151.973 )</div>
<svg style="left:120px;top:700px" width="6" height="10" viewBox="0 0 6 10"><path d="M0 0l6 5-6 5z" fill="#000"/></svg>
<div class="a t" style="left:5px;top:719px;font-size:11px"><span class="cj">文档颜色预置文件</span><span style="letter-spacing:-0.22px">: RGB: sRGB IEC61966-2.1; CMYK: Japan Color 2001 Coated; </span><span class="cj">灰度</span>: Dot Gain 15%</div>
<svg style="left:504px;top:719px" width="6" height="10" viewBox="0 0 6 10"><path d="M0 0l6 5-6 5z" fill="#000"/></svg>
<div class="a" style="left:836px;top:696px;width:18px;height:18px;background:#fff;border:1px solid #606060"></div>
<svg style="left:836px;top:696px" width="18" height="18" viewBox="0 0 18 18"><path d="M1.5 1.5L16.5 16.5M16.5 1.5L1.5 16.5" stroke="#000" stroke-width="1"/></svg>
<div class="a" style="left:836px;top:717px;width:18px;height:17px;background:#231815;border:1px solid #707070"></div>
<div class="a" style="left:811px;top:698px;width:1px;height:14px;background:#a09c94"></div>
<div class="a" style="left:812px;top:698px;width:1px;height:14px;background:#fff"></div>
<svg style="left:771px;top:698px" width="16" height="15" viewBox="0 0 16 15"><rect x=".5" y=".5" width="15" height="11" fill="#d8d8e8" stroke="#5a78b0"/><rect x="2" y="2" width="12" height="8" fill="#fff"/><path d="M2 2h12v2H2z" fill="#e06060" opacity=".6"/><path d="M2 8h12v2H2z" fill="#60a060" opacity=".6"/><circle cx="8" cy="6" r="2.5" fill="#fff" stroke="#333" stroke-width="1.2"/><rect x="4" y="13" width="8" height="1.5" fill="#8a98c0"/></svg>
<svg style="left:814px;top:697px" width="17" height="16" viewBox="0 0 17 16"><path d="M7 1l6 6-5.5 5.5-6-6z" fill="#fff" stroke="#3a3a5a" stroke-width="1.2"/><path d="M2 8l5.5 5.5 5-5z" fill="#f08000"/><path d="M13 7q3 1 3 5" stroke="#f08000" stroke-width="1.5" fill="none"/></svg>
<svg style="left:818px;top:718px" width="10" height="15" viewBox="0 0 10 15"><path d="M5 .5q4.5 4.5 3.5 8L7 11H3L1.5 8.5q-1-4 3.5-8z" fill="#fff" stroke="#3a3a5a"/><path d="M5 3v5" stroke="#3a3a5a"/><rect x="1" y="12" width="8" height="2" fill="#2a2e4a"/></svg>
<div class="a" style="left:0px;top:736px;width:1024px;height:1px;background:#a09c94"></div>
<div class="a" style="left:0px;top:737px;width:1024px;height:1px;background:#fff"></div>
<div class="a" style="left:2px;top:742px;width:47px;height:22px;background:#d4d0c8;border-top:1px solid #fff;border-left:1px solid #fff;border-right:1px solid #404040;border-bottom:1px solid #404040;box-shadow:inset -1px -1px 0 #808080"></div>
<svg style="left:4px;top:744px" width="16" height="14" viewBox="0 0 16 14"><path d="M4 1.5q2.5-1.2 5 .3l-1.2 5q-2.5-1.5-5-.3z" fill="#f0501c"/><path d="M9.8 2q2.5 1.5 5 .3l-1.2 5q-2.5 1.2-5-.3z" fill="#46b02a"/><path d="M2.6 7.5q2.5-1.2 5 .3l-1.2 5q-2.5-1.5-5-.3z" fill="#2a6ee0"/><path d="M8.4 8q2.5 1.5 5 .3l-1.2 5q-2.5 1.2-5-.3z" fill="#f8c010"/></svg>
<div class="a t" style="left:22px;top:745px;font-size:12px;line-height:14px;font-weight:bold">开始</div>
<svg style="left:57px;top:746px" width="15" height="15" viewBox="0 0 15 15"><circle cx="7.5" cy="7.5" r="6" fill="none" stroke="#f0a020" stroke-width="2.6"/><path d="M7.5 1.5a6 6 0 0 1 6 6" stroke="#40a840" stroke-width="2.6" fill="none"/><path d="M1.5 7.5a6 6 0 0 1 6-6" stroke="#3070d8" stroke-width="2.6" fill="none"/><path d="M4.2 12.4a6 6 0 0 0 9.3-4.9" stroke="#e8c020" stroke-width="2.6" fill="none"/><circle cx="7.5" cy="7.5" r="4" fill="#f4f4f8"/><path d="M6 5l3.5 2.5L6 10z" fill="#222"/></svg>
<svg style="left:80px;top:746px" width="15" height="15" viewBox="0 0 15 15"><rect x="1" y="2" width="12" height="12" rx="2" fill="#2a70d8"/><rect x="3" y="4" width="8" height="8" fill="#f0f0f0"/><path d="M5 10l5-5M7 5h3v3" stroke="#2a70d8" stroke-width="1.5" fill="none"/><circle cx="13" cy="5" r="1.5" fill="#f06020"/></svg>
<div class="a" style="left:103px;top:746px;width:17px;height:16px;background:#ecebe8"></div>
<svg style="left:104px;top:747px" width="15" height="14" viewBox="0 0 15 14"><path d="M7.5 2v11M2 5h11M3 8h9" stroke="#d01040" stroke-width="2"/></svg>
<svg style="left:131px;top:749px" width="8" height="6" viewBox="0 0 8 6"><path d="M0 0l3 3-3 3M4 0l3 3-3 3" stroke="#000" stroke-width="1.4" fill="none"/></svg>
<div class="a hatch" style="left:143px;top:742px;width:159px;height:21px;border-top:1px solid #000;border-left:1px solid #000;border-right:1px solid #fff;border-bottom:1px solid #fff;box-shadow:inset 1px 1px 0 #808080"></div>
<svg style="left:148px;top:746px" width="16" height="16" viewBox="0 0 16 16"><rect width="16" height="16" fill="#7ab33e"/><path d="M2 3l3-2 9 8-2 5-4-1z" fill="#fff"/><path d="M12 13l1.5 1.5" stroke="#222" stroke-width="1.5"/><path d="M3 4l5 5" stroke="#7ab33e" stroke-width="1"/></svg>
<div class="a t" style="left:168px;top:748px;font-family:'Liberation Mono',monospace;font-size:10px;line-height:13px">CorelDRAW X5 - [F:\...</div>
<svg style="left:958px;top:747px" width="18" height="14" viewBox="0 0 18 14"><path d="M9 0q-3 1 0 3" stroke="#333" fill="none"/><rect x=".5" y="3.5" width="17" height="10" rx="1.5" fill="#fff" stroke="#333"/><path d="M3 6h12M3 8h12M4 10h10" stroke="#555" stroke-dasharray="1 1"/></svg>
<div class="a" style="left:979px;top:742px;width:1px;height:24px;background:#a09c94"></div>
<div class="a" style="left:980px;top:742px;width:1px;height:24px;background:#fff"></div>
<div class="a" style="left:985px;top:742px;width:39px;height:24px;border-top:1px solid #808080;border-left:1px solid #808080;border-right:1px solid #fff;border-bottom:1px solid #fff"></div>
<svg style="left:993px;top:751px" width="8" height="7" viewBox="0 0 8 7"><path d="M3.5 0L0.5 3.5 3.5 7M7.5 0l-3 3.5 3 3.5" stroke="#000" stroke-width="1.5" fill="none"/></svg>
<svg style="left:1003px;top:745px" width="18" height="16" viewBox="0 0 18 16"><rect x="1" y="3" width="9" height="7" fill="#3050b0"/><rect x="2" y="11" width="7" height="3" fill="#6080d0"/><path d="M12 2q2 2 0 4M14 0q3 4 0 8" stroke="#3050b0" fill="none"/></svg>
</body></html>
